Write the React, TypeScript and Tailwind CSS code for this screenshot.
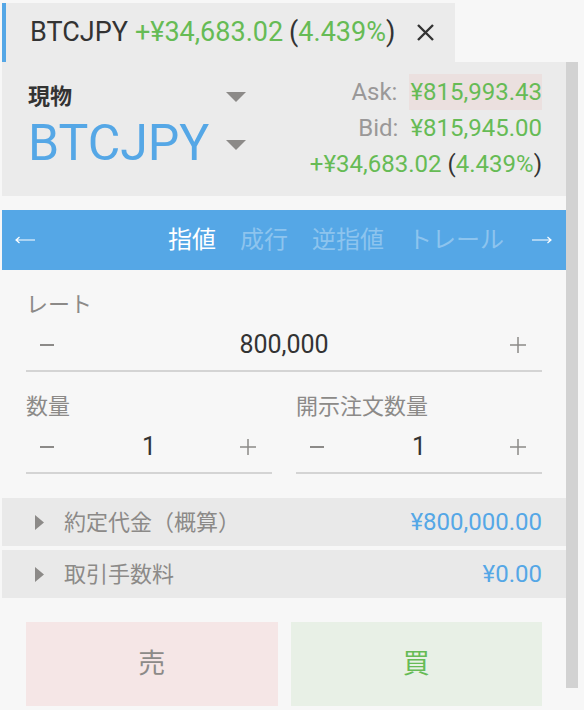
const FONT = "font-['Roboto','Noto_Sans_CJK_JP',sans-serif]";

const Tri = ({ className = "" }: { className?: string }) => (
  <svg width="20" height="10" viewBox="0 0 20 10" className={className}>
    <path d="M0 0 H20 L10 10 Z" fill="#8c8a88" />
  </svg>
);

const Arrow = ({ dir }: { dir: "l" | "r" }) => (
  <svg width="20" height="8" viewBox="0 0 20 8">
    {dir === "l" ? (
      <path d="M20 4 H1.5 M4.5 1 L1 4 L4.5 7" stroke="#fff" strokeWidth="1.2" fill="none" />
    ) : (
      <path d="M0 4 H18.5 M15.5 1 L19 4 L15.5 7" stroke="#fff" strokeWidth="1.2" fill="none" />
    )}
  </svg>
);

const Stepper = ({ value, className = "" }: { value: string; className?: string }) => (
  <div className={`flex items-center h-[52px] border-b-2 border-[#d4d4d4] ${className}`}>
    <div className="w-[48px] pl-[14px]">
      <div className="w-[14px] h-[1.5px] bg-[#8c8a88]" />
    </div>
    <span className="flex-1 text-center text-[25px] text-[#333]">{value}</span>
    <div className="w-[48px] pr-[16px] flex justify-end">
      <svg width="16" height="16" viewBox="0 0 16 16">
        <path d="M8 0 V16 M0 8 H16" stroke="#8c8a88" strokeWidth="1.5" />
      </svg>
    </div>
  </div>
);

const SumRow = ({ label, value }: { label: string; value: string }) => (
  <div className="flex items-center h-[48px] bg-[#e9e9e9] pl-[33px] pr-[24px]">
    <svg width="9" height="15" viewBox="0 0 9 15">
      <path d="M0 0 L9 7.5 L0 15 Z" fill="#8c8a88" />
    </svg>
    <span className="ml-[20px] text-[22px] text-[#8c8a88]">{label}</span>
    <span className="ml-auto text-[24px] text-[#55a7e6]">{value}</span>
  </div>
);

export default function App() {
  return (
    <div className={`w-[584px] h-[710px] bg-[#f7f7f7] overflow-hidden flex ${FONT}`}>
      <div className="w-[566px] pl-[2px] flex flex-col">
        {/* tab */}
        <div className="h-[62px] pt-[3px] flex">
          <div className="w-[453px] bg-[#ebebeb] border-l-4 border-[#55a7e6] flex items-center pl-[24px] text-[27px]">
            <span className="text-[#333]">BTCJPY</span>
            <span className="ml-[7px] text-[#66bb55]">+¥34,683.02</span>
            <span className="ml-[6px] text-[#333]">(</span>
            <span className="text-[#66bb55]">4.439%</span>
            <span className="text-[#333]">)</span>
            <svg width="17" height="17" viewBox="0 0 17 17" className="ml-[22px]">
              <path d="M1 1 L16 16 M16 1 L1 16" stroke="#333" strokeWidth="2.4" />
            </svg>
          </div>
        </div>

        {/* header */}
        <div className="h-[134px] bg-[#ebebeb] flex pl-[26px] pr-[24px]">
          <div className="w-[218px] pt-[20px]">
            <div className="flex items-center justify-between">
              <span className="text-[22px] font-bold text-[#333] leading-[30px]">現物</span>
              <Tri />
            </div>
            <div className="flex items-center justify-between mt-[2px]">
              <span className="text-[50px] text-[#55a7e6] leading-[58px]">BTCJPY</span>
              <Tri className="mt-[4px]" />
            </div>
          </div>
          <div className="ml-auto pt-[12px] flex flex-col items-end text-[24px] leading-[36px]">
            <div className="flex">
              <span className="text-[#9a9898] mr-[12px]">Ask:</span>
              <span className="text-[#66bb55] bg-[#ebe0df] pl-[1px]">¥815,993.43</span>
            </div>
            <div className="flex">
              <span className="text-[#9a9898] mr-[12px]">Bid:</span>
              <span className="text-[#66bb55]">¥815,945.00</span>
            </div>
            <div className="flex">
              <span className="text-[#66bb55]">+¥34,683.02</span>
              <span className="ml-[6px] text-[#333]">(</span>
              <span className="text-[#66bb55]">4.439%</span>
              <span className="text-[#333]">)</span>
            </div>
          </div>
        </div>

        {/* order type bar */}
        <div className="mt-[14px] h-[60px] bg-[#55a7e6] flex items-center pl-[13px] pr-[14px]">
          <Arrow dir="l" />
          <div className="ml-auto flex gap-[24px] text-[24px]">
            <span className="text-white">指値</span>
            <span className="text-[#8dc4ee]">成行</span>
            <span className="text-[#8dc4ee]">逆指値</span>
            <span className="text-[#8dc4ee]">トレール</span>
          </div>
          <div className="ml-[28px]">
            <Arrow dir="r" />
          </div>
        </div>

        {/* form */}
        <div className="px-[24px] pt-[20px]">
          <div className="text-[22px] text-[#8c8a88] leading-[30px]">レート</div>
          <Stepper value="800,000" />
          <div className="grid grid-cols-2 gap-[24px] mt-[20px]">
            <div>
              <div className="text-[22px] text-[#8c8a88] leading-[30px]">数量</div>
              <Stepper value="1" />
            </div>
            <div>
              <div className="text-[22px] text-[#8c8a88] leading-[30px]">開示注文数量</div>
              <Stepper value="1" />
            </div>
          </div>
        </div>

        <div className="mt-[24px] flex flex-col gap-[4px]">
          <SumRow label="約定代金（概算）" value="¥800,000.00" />
          <SumRow label="取引手数料" value="¥0.00" />
        </div>

        <div className="mt-[24px] px-[24px] grid grid-cols-2 gap-[13px]">
          <div className="h-[84px] bg-[#f5e6e6] flex items-center justify-center text-[27px] text-[#8c8a88]">売</div>
          <div className="h-[84px] bg-[#e8f0e6] flex items-center justify-center text-[27px] text-[#66bb55]">買</div>
        </div>
      </div>
      <div className="w-[12px] mt-[62px] h-[626px] bg-[#d2d2d2]" />
    </div>
  );
}
